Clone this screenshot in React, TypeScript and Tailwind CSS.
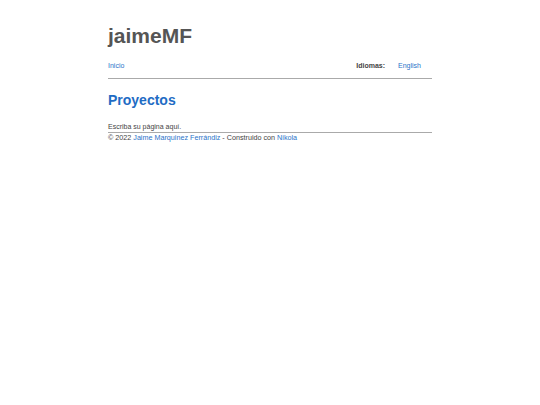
import React from "react";

export default function App() {
  return (
    <div className="min-h-screen bg-white" style={{ fontFamily: '"Liberation Sans", Arial, sans-serif' }}>
      <div className="mx-auto w-[324px] pt-[22px]">
        <h1 className="text-[21px] leading-[28px] font-bold text-[#555555]">jaimeMF</h1>
        <nav className="mt-[11px] flex items-center justify-between text-[7px] leading-[10px] pb-[7px] border-b border-[#aaaaaa]">
          <a className="text-[#2a73c9]" href="#">Inicio</a>
          <div className="flex items-center gap-[13px]">
            <span className="font-bold text-[#444444]">Idiomas:</span>
            <a className="text-[#2a73c9] mr-[11px]" href="#">English</a>
          </div>
        </nav>
        <h2 className="mt-[11px] text-[14px] leading-[20px] font-bold text-[#1f6cc4]">Proyectos</h2>
        <p className="mt-[12px] text-[7px] leading-[9px] text-[#444444] border-b border-[#aaaaaa] pb-[1px]">Escriba su página aquí.</p>
        <footer className="text-[7.2px] leading-[10px] text-[#444444]">
          © 2022 <a className="text-[#2a73c9]" href="#">Jaime Marquinez Ferrándiz</a> - Construido con <a className="text-[#2a73c9]" href="#">Nikola</a>
        </footer>
      </div>
    </div>
  );
}
